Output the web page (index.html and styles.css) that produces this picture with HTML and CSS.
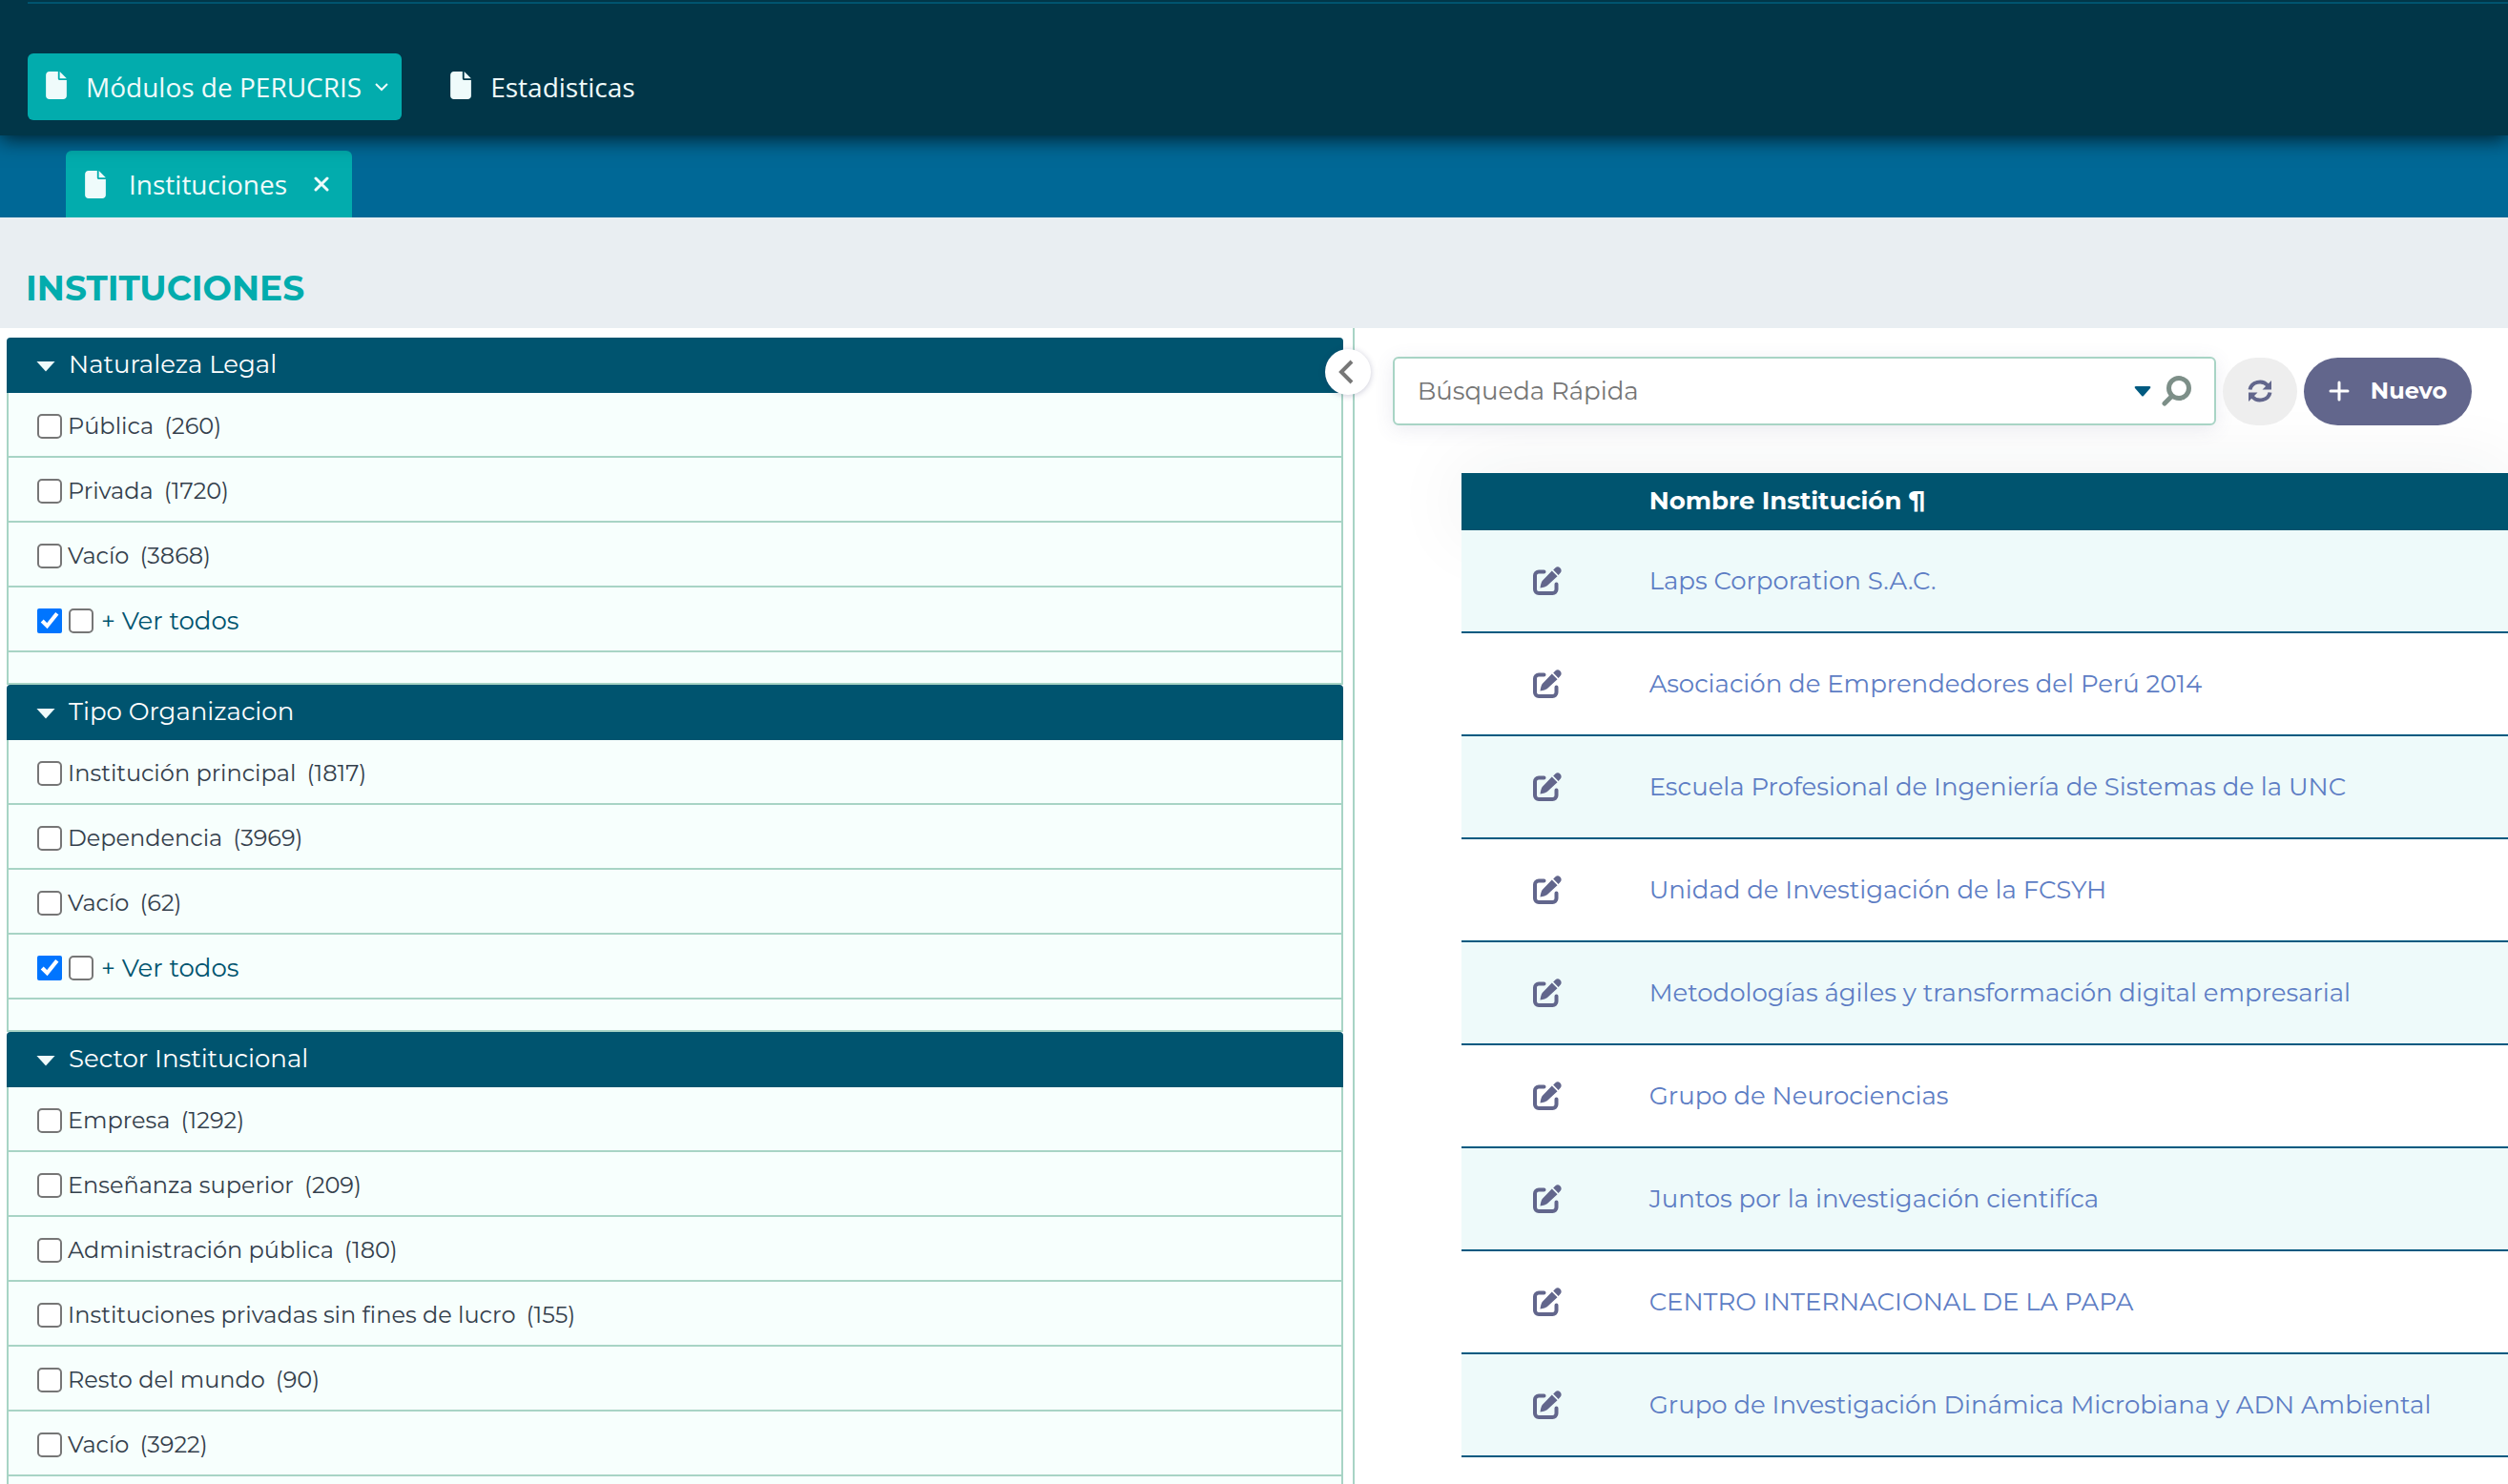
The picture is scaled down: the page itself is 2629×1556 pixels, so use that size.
FILE: index.html
```html
<!DOCTYPE html>
<html lang="es">
<head>
<meta charset="utf-8">
<meta name="viewport" content="width=device-width, initial-scale=1">
<title>Instituciones</title>
<link rel="stylesheet" href="styles.css">
</head>
<body>
<svg class="sprite" aria-hidden="true">
  <symbol id="i-file" viewBox="0 0 384 512"><path fill="currentColor" d="M0 64C0 28.700 28.700 0 64 0h160v128c0 17.700 14.300 32 32 32h128v288c0 35.300-28.700 64-64 64H64c-35.300 0-64-28.700-64-64zm384 64H256V0z"/></symbol>
  <symbol id="i-edit" viewBox="0 0 30 30"><path fill="none" stroke="currentColor" stroke-width="4" stroke-linecap="round" stroke-linejoin="round" d="M11.500 5.500H6a4 4 0 0 0-4 4V24a4 4 0 0 0 4 4h14.500a4 4 0 0 0 4-4v-5.500"/><path fill="currentColor" d="M19.800 4.600l5.700 5.700L14.700 20.300Q13 21.500 7.500 22.500 8.200 17 9.700 15zM21.200 3.500l2.300-2.300a3.800 3.800 0 0 1 5.300 5.300L26.600 8.900z"/></symbol>
</svg>

<header class="topbar">
  <nav class="menu">
    <button class="menu-item menu-item-active" type="button">
      <svg class="file-icon"><use href="#i-file"/></svg>
      <span>Módulos de PERUCRIS</span>
      <svg class="menu-caret" viewBox="0 0 14 9"><path d="M1 1l6 6 6-6"/></svg>
    </button>
    <button class="menu-item" type="button">
      <svg class="file-icon"><use href="#i-file"/></svg>
      <span>Estadisticas</span>
    </button>
  </nav>
</header>

<div class="tabbar">
  <div class="tab">
    <svg class="file-icon"><use href="#i-file"/></svg>
    <span>Instituciones</span>
    <button class="tab-close" type="button" aria-label="Cerrar"><svg viewBox="0 0 16 16"><path d="M2 2l12 12M14 2L2 14"/></svg></button>
  </div>
</div>

<div class="title-bar"><h1 class="title">INSTITUCIONES</h1></div>

<main class="workspace">
  <aside class="filters">
    <button class="collapse" type="button" aria-label="Ocultar filtros"><svg viewBox="0 0 16 26"><path d="M14 2L3 13l11 11"/></svg></button>
    <section class="facet">
      <h2 class="facet-title">Naturaleza Legal</h2>
      <ul class="facet-list">
        <li><label><input type="checkbox">Pública <span class="count">(260)</span></label></li>
        <li><label><input type="checkbox">Privada <span class="count">(1720)</span></label></li>
        <li><label><input type="checkbox">Vacío <span class="count">(3868)</span></label></li>
        <li class="all"><input type="checkbox" checked aria-label="Filtro activo"><label><input type="checkbox">+ Ver todos</label></li>
      </ul>
    </section>
    <section class="facet">
      <h2 class="facet-title">Tipo Organizacion</h2>
      <ul class="facet-list">
        <li><label><input type="checkbox">Institución principal <span class="count">(1817)</span></label></li>
        <li><label><input type="checkbox">Dependencia <span class="count">(3969)</span></label></li>
        <li><label><input type="checkbox">Vacío <span class="count">(62)</span></label></li>
        <li class="all"><input type="checkbox" checked aria-label="Filtro activo"><label><input type="checkbox">+ Ver todos</label></li>
      </ul>
    </section>
    <section class="facet">
      <h2 class="facet-title">Sector Institucional</h2>
      <ul class="facet-list">
        <li><label><input type="checkbox">Empresa <span class="count">(1292)</span></label></li>
        <li><label><input type="checkbox">Enseñanza superior <span class="count">(209)</span></label></li>
        <li><label><input type="checkbox">Administración pública <span class="count">(180)</span></label></li>
        <li><label><input type="checkbox">Instituciones privadas sin fines de lucro <span class="count">(155)</span></label></li>
        <li><label><input type="checkbox">Resto del mundo <span class="count">(90)</span></label></li>
        <li><label><input type="checkbox">Vacío <span class="count">(3922)</span></label></li>
      </ul>
    </section>
  </aside>

  <section class="results">
    <div class="toolbar">
      <div class="search">
        <input class="search-input" type="text" placeholder="Búsqueda Rápida" aria-label="Búsqueda Rápida">
        <button class="search-button" type="button" aria-label="Opciones de búsqueda"><svg class="search-caret" viewBox="0 0 18 11"><path d="M2 0h14q2 0 1 2l-7 8q-1 1-2 0L1 2Q0 0 2 0z"/></svg></button>
        <button class="search-button" type="button" aria-label="Buscar"><svg class="search-glass" viewBox="0 0 32 32"><circle cx="19" cy="13" r="10.500"/><path d="M11.500 21.500L4 29"/></svg></button>
      </div>
      <button class="refresh" type="button" aria-label="Actualizar"><svg viewBox="0 0 26 24"><path class="arc" d="M2.500 10.500A10.500 9.500 0 0 1 21 6M23.500 13.500A10.500 9.500 0 0 1 5 18"/><path class="tip" d="M25 1v9.500h-9.500zM1 23v-9.500h9.500z"/></svg></button>
      <button class="new" type="button"><svg viewBox="0 0 22 22"><path d="M11 2v18M2 11h18"/></svg>Nuevo</button>
    </div>
    <table class="grid">
      <thead>
        <tr><th class="col-edit" scope="col"></th><th scope="col">Nombre Institución ¶</th></tr>
      </thead>
      <tbody>
        <tr><td class="col-edit"><button class="edit" type="button" aria-label="Editar"><svg><use href="#i-edit"/></svg></button></td><td><a href="#">Laps Corporation S.A.C.</a></td></tr>
        <tr><td class="col-edit"><button class="edit" type="button" aria-label="Editar"><svg><use href="#i-edit"/></svg></button></td><td><a href="#">Asociación de Emprendedores del Perú 2014</a></td></tr>
        <tr><td class="col-edit"><button class="edit" type="button" aria-label="Editar"><svg><use href="#i-edit"/></svg></button></td><td><a href="#">Escuela Profesional de Ingeniería de Sistemas de la UNC</a></td></tr>
        <tr><td class="col-edit"><button class="edit" type="button" aria-label="Editar"><svg><use href="#i-edit"/></svg></button></td><td><a href="#">Unidad de Investigación de la FCSYH</a></td></tr>
        <tr><td class="col-edit"><button class="edit" type="button" aria-label="Editar"><svg><use href="#i-edit"/></svg></button></td><td><a href="#">Metodologías ágiles y transformación digital empresarial</a></td></tr>
        <tr><td class="col-edit"><button class="edit" type="button" aria-label="Editar"><svg><use href="#i-edit"/></svg></button></td><td><a href="#">Grupo de Neurociencias</a></td></tr>
        <tr><td class="col-edit"><button class="edit" type="button" aria-label="Editar"><svg><use href="#i-edit"/></svg></button></td><td><a href="#">Juntos por la investigación cientifíca</a></td></tr>
        <tr><td class="col-edit"><button class="edit" type="button" aria-label="Editar"><svg><use href="#i-edit"/></svg></button></td><td><a href="#">CENTRO INTERNACIONAL DE LA PAPA</a></td></tr>
        <tr><td class="col-edit"><button class="edit" type="button" aria-label="Editar"><svg><use href="#i-edit"/></svg></button></td><td><a href="#">Grupo de Investigación Dinámica Microbiana y ADN Ambiental</a></td></tr>
      </tbody>
    </table>
  </section>
</main>
</body>
</html>
```
FILE: styles.css
```css
* { box-sizing: border-box; }

html { height: 100%; }

body {
  margin: 0;
  min-height: 100%;
  display: flex;
  flex-direction: column;
  overflow: hidden;
  background: #fff;
  color: #34404c;
  font: 24px/32px Montserrat, Inter, sans-serif;
}

button {
  margin: 0;
  padding: 0;
  border: 0;
  background: none;
  color: inherit;
  font: inherit;
}

svg { display: block; flex: none; }
.sprite { position: absolute; width: 0; height: 0; }

/* Main menu */
.topbar {
  position: relative;
  z-index: 1;
  padding: 2px 0 16px 29px;
  background: #013648;
  box-shadow: 0 4px 20px rgba(0, 0, 0, .7);
}
.menu {
  display: flex;
  gap: 32px;
  padding-top: 52px;
  border-top: 2px solid #00546f;
}
.menu-item {
  display: flex;
  align-items: center;
  height: 70px;
  padding: 0 14px 0 19px;
  border-radius: 6px;
  color: #effbfb;
  font: 28px/38px "Open Sans", "Noto Sans", sans-serif;
}
.menu-item-active { background: #02acad; }
.file-icon { width: 22px; height: 29px; margin: 0 20px 4px 0; }
.menu-caret {
  width: 14px;
  height: 9px;
  margin-left: 14px;
  fill: none;
  stroke: currentColor;
  stroke-width: 2;
}

/* Open tabs */
.tabbar {
  display: flex;
  padding: 16px 0 0 69px;
  background: #006896;
}
.tab {
  display: flex;
  align-items: center;
  height: 70px;
  padding: 0 24px 0 20px;
  border-radius: 6px 6px 0 0;
  background: #02acad;
  color: #effbfb;
  font: 28px/38px "Open Sans", "Noto Sans", sans-serif;
}
.tab .file-icon { margin: 0 24px 0 0; }
.tab-close { margin-left: 28px; }
.tab-close svg {
  width: 16px;
  height: 16px;
  fill: none;
  stroke: currentColor;
  stroke-width: 3;
  stroke-linecap: round;
}

.title-bar { padding: 50px 27px 18px; background: #e9eef2; }
.title { margin: 0; color: #02acad; font-size: 36px; font-weight: 700; line-height: 48px; }

.workspace { display: flex; flex: 1; }

/* Filters */
.filters {
  position: relative;
  width: 54%;
  padding: 10px 10px 0 7px;
  border-right: 2px solid #a8d4c5;
}
.collapse {
  position: absolute;
  z-index: 1;
  top: 22px;
  right: -19px;
  display: grid;
  place-items: center;
  width: 48px;
  height: 48px;
  padding-right: 4px;
  border-radius: 50%;
  background: #fff;
  box-shadow: 0 1px 6px rgba(40, 40, 90, .25);
}
.collapse svg { width: 16px; height: 26px; fill: none; stroke: #777; stroke-width: 4; }
.facet-title {
  display: flex;
  align-items: center;
  gap: 14px;
  height: 58px;
  margin: 0;
  padding: 0 31px 2px;
  border-radius: 4px 4px 0 0;
  background: #00546f;
  color: #fff;
  font-size: 26px;
  font-weight: 400;
}
.facet-title::before {
  content: "";
  width: 20px;
  height: 11px;
  margin-top: 4px;
  background: #effbfb;
  clip-path: polygon(0 0, 100% 0, 50% 100%);
}
.facet-list {
  margin: 0;
  padding: 0 0 32px;
  border: 2px solid #a8d4c5;
  border-top: 0;
  background: #f7fffd;
  list-style: none;
}
.facet-list li {
  display: flex;
  align-items: center;
  gap: 7px;
  height: 68px;
  padding: 3px 0 0 30px;
  border-bottom: 2px solid #a8d4c5;
}
.facet-list label { display: flex; align-items: center; gap: 6px; }
.facet-list input { width: 26px; height: 26px; margin: 0; }
.facet-list input:not(:checked) {
  appearance: none;
  border: 2px solid #767676;
  border-radius: 5px;
  background: #fff;
}
.count { margin-left: 5px; }
.all { color: #00546f; font-size: 26px; }
.all label { gap: 8px; }

/* Results */
.results { flex: 1; min-width: 0; padding: 30px 0 0 40px; }
.toolbar { display: flex; align-items: center; gap: 7px; padding-right: 38px; }
.search {
  display: flex;
  flex: 1;
  align-items: center;
  gap: 10px;
  height: 72px;
  padding: 0 24px;
  border: 2px solid #a8d4c5;
  border-radius: 6px;
  background: #fff;
  box-shadow: 0 4px 20px rgba(90, 90, 140, .12);
}
.search-input {
  flex: 1;
  min-width: 0;
  height: 48px;
  padding: 0;
  border: 0;
  outline: 0;
  background: none;
  font: inherit;
  font-size: 26px;
}
.search-input::placeholder { color: #757575; opacity: 1; }
.search-caret { width: 18px; height: 11px; fill: #005a80; }
.search-glass {
  width: 32px;
  height: 32px;
  fill: none;
  stroke: #7d8f88;
  stroke-width: 5;
  stroke-linecap: round;
}
.refresh {
  display: grid;
  place-items: center;
  width: 78px;
  height: 71px;
  border-radius: 36px;
  background: #eee;
  color: #62668c;
}
.refresh svg { width: 26px; height: 24px; }
.arc { fill: none; stroke: currentColor; stroke-width: 4; }
.tip { fill: currentColor; }
.new {
  display: flex;
  align-items: center;
  justify-content: center;
  gap: 22px;
  width: 176px;
  height: 71px;
  border-radius: 36px;
  background: #62668c;
  color: #fff;
  font-weight: 700;
}
.new svg { width: 22px; height: 22px; stroke: currentColor; stroke-width: 3; stroke-linecap: round; }

.grid {
  width: calc(100% - 72px);
  margin: 50px 0 0 72px;
  border-spacing: 0;
  font-size: 26px;
}
.grid thead { box-shadow: 0 0 80px rgba(40, 50, 50, .08); }
.grid th {
  height: 60px;
  padding: 0 0 2px;
  background: #00546f;
  color: #fff;
  font-weight: 700;
  text-align: left;
}
.grid td { height: 108px; padding: 0; border-bottom: 2px solid #005a80; background: #fff; }
.grid tr:nth-child(odd) td { background: #eefafa; }
.grid .col-edit { width: 197px; }
.grid a { color: #5d7dc4; text-decoration: none; }
.edit { display: block; margin-left: 75px; color: #62668c; }
.edit svg { width: 30px; height: 30px; }
```
